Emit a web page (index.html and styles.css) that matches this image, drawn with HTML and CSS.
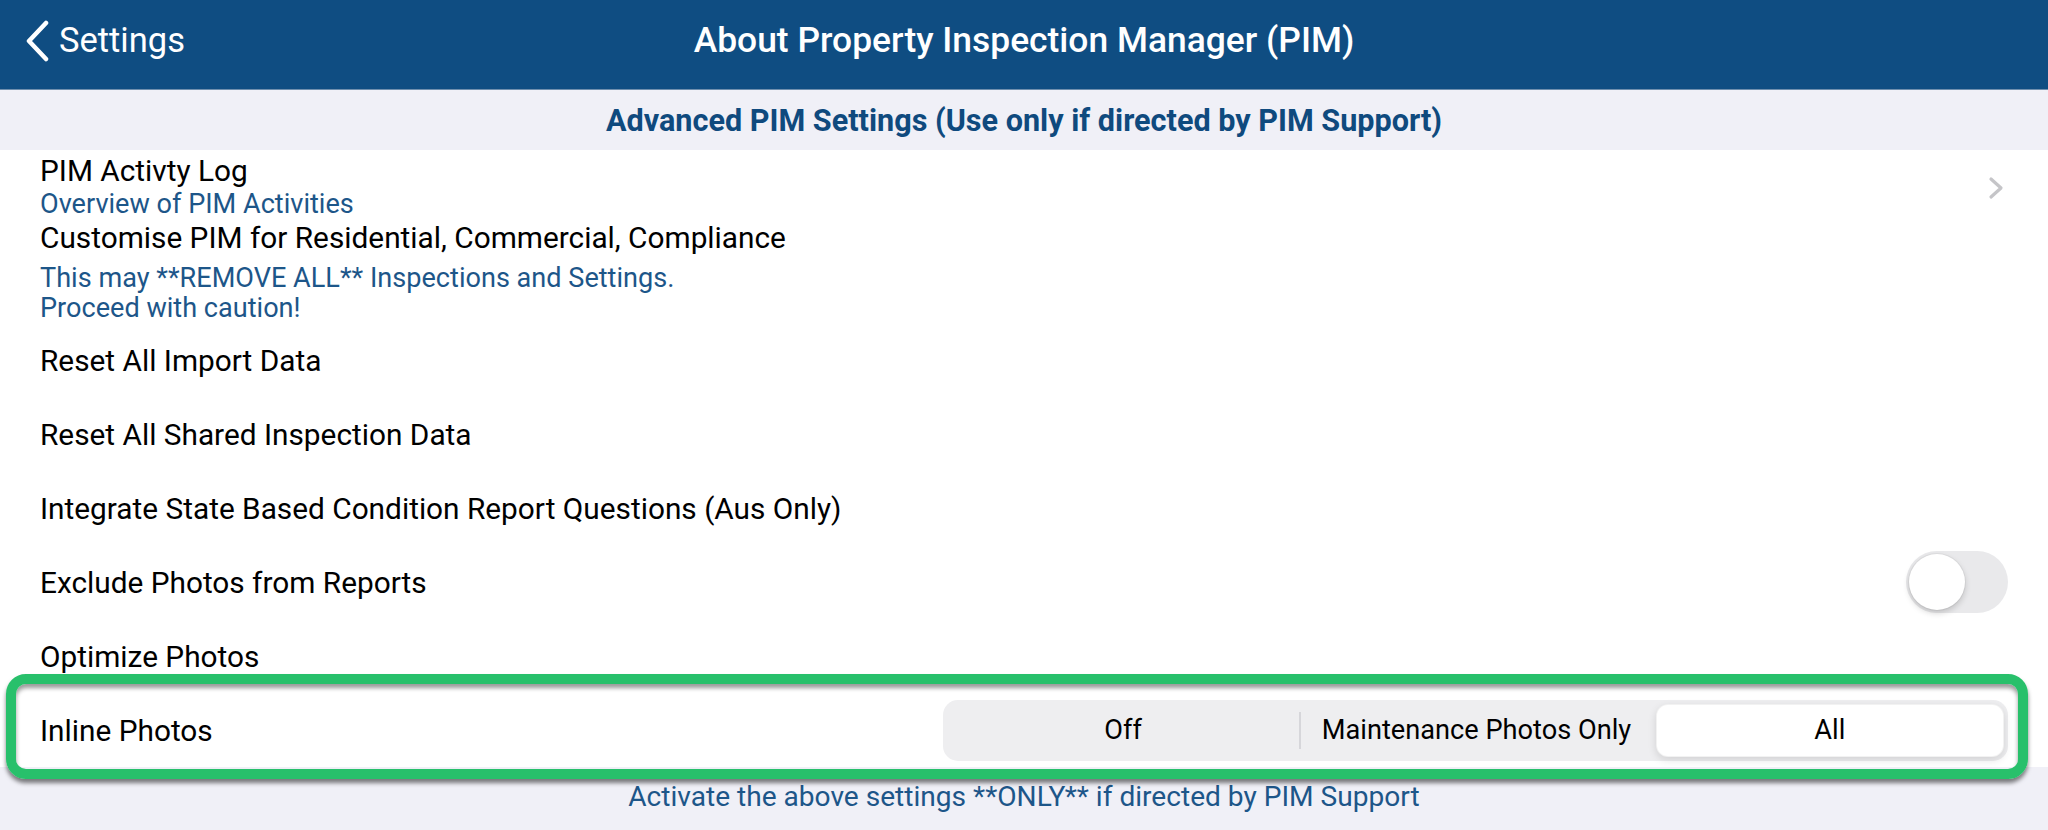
FILE: index.html
```html
<!DOCTYPE html>
<html lang="en">
<head>
<meta charset="utf-8">
<title>About Property Inspection Manager (PIM)</title>
<link rel="stylesheet" href="styles.css">
</head>
<body>
<div class="screen">
  <header class="nav">
    <div class="nav-back">
      <svg class="back-icon" width="26" height="42" viewBox="0 0 26 42"><polyline points="21,3 4,21 21,39" fill="none" stroke="#fff" stroke-width="4.5" stroke-linecap="round" stroke-linejoin="round"/></svg>
      <span>Settings</span>
    </div>
    <h1 class="nav-title">About Property Inspection Manager (PIM)</h1>
    <div class="nav-spacer"></div>
  </header>

  <div class="section-head">Advanced PIM Settings (Use only if directed by PIM Support)</div>

  <ul class="list">
    <li class="cell cell-nav">
      <div class="cell-text">
        <div class="title">PIM Activty Log</div>
        <div class="sub">Overview of PIM Activities</div>
      </div>
      <svg class="chevron" width="16" height="24" viewBox="0 0 16 24"><polyline points="3,3 13,12 3,21" fill="none" stroke="#c5c5c8" stroke-width="3.2" stroke-linecap="round" stroke-linejoin="round"/></svg>
    </li>
    <li class="cell cell-warn">
      <div class="title">Customise PIM for Residential, Commercial, Compliance</div>
      <div class="sub sub-warn">This may **REMOVE ALL** Inspections and Settings.<br>Proceed with caution!</div>
    </li>
    <li class="cell cell-plain">Reset All Import Data</li>
    <li class="cell cell-plain">Reset All Shared Inspection Data</li>
    <li class="cell cell-plain">Integrate State Based Condition Report Questions (Aus Only)</li>
    <li class="cell cell-plain">
      <span>Exclude Photos from Reports</span>
      <span class="switch"><span class="knob"></span></span>
    </li>
    <li class="cell cell-plain">Optimize Photos</li>
    <li class="cell cell-plain cell-highlight">
      <span>Inline Photos</span>
      <div class="segmented">
        <div class="seg">Off</div>
        <div class="seg seg-divided">Maintenance Photos Only</div>
        <div class="seg seg-selected">All</div>
      </div>
    </li>
  </ul>

  <div class="footer-note">Activate the above settings **ONLY** if directed by PIM Support</div>
</div>
</body>
</html>
```

FILE: styles.css
```css
* { box-sizing: border-box; }

html, body {
  margin: 0;
  padding: 0;
}

body {
  width: 2048px;
  height: 830px;
  overflow: hidden;
  background: #f0f0f7;
  font-family: Roboto, "Liberation Sans", Arial, sans-serif;
  color: #000;
}

.screen {
  display: flex;
  flex-direction: column;
  height: 830px;
}

/* ---------- navigation bar ---------- */
.nav {
  height: 90px;
  background: #0f4d82;
  border-bottom: 1px solid #6f8fae;
  display: grid;
  grid-template-columns: 1fr auto 1fr;
  align-items: center;
  color: #fff;
}

.nav-back {
  display: flex;
  align-items: center;
  gap: 8px;
  padding-left: 25px;
  font-size: 34.5px;
  font-weight: 400;
  padding-bottom: 9px;
}

.back-icon { display: block; margin-top: 2px; }

.nav-title {
  margin: 0;
  font-size: 35.4px;
  font-weight: 500;
  letter-spacing: 0;
  padding-bottom: 9px;
}

/* ---------- section header ---------- */
.section-head {
  height: 60px;
  display: flex;
  align-items: center;
  justify-content: center;
  color: #0f4a7e;
  font-size: 30.6px;
  font-weight: 700;
  padding-top: 0;
}

/* ---------- list ---------- */
.list {
  list-style: none;
  margin: 0;
  padding: 0;
  background: #fff;
}

.cell {
  padding: 0 40px;
  font-size: 29.8px;
}

.title {
  font-size: 29.8px;
  line-height: 34px;
}

.sub {
  font-size: 27.1px;
  line-height: 32px;
  color: #1d5689;
}

.cell-nav {
  height: 71px;
  display: flex;
  align-items: center;
  justify-content: space-between;
  padding-right: 44px;
}

.cell-nav .cell-text { padding-top: 3px; }

.chevron { display: block; margin-top: 4px; }

.cell-warn {
  height: 102px;
  padding-top: 0;
}

.sub-warn {
  margin-top: 8px;
  line-height: 30px;
}

.cell-plain {
  height: 74px;
  display: flex;
  align-items: center;
  justify-content: space-between;
}

/* ---------- switch ---------- */
.switch {
  width: 102px;
  height: 62px;
  border-radius: 31px;
  background: #e9e9eb;
  display: flex;
  align-items: center;
  padding-left: 3px;
}

.knob {
  width: 56px;
  height: 56px;
  border-radius: 50%;
  background: #fff;
  box-shadow: 0 3px 6px rgba(0, 0, 0, 0.18), 0 0 0 1px rgba(0, 0, 0, 0.04);
}

/* ---------- segmented control ---------- */
.segmented {
  width: 1065px;
  height: 61px;
  border-radius: 15px;
  background: #eeeef0;
  display: grid;
  grid-template-columns: 1fr 1fr 1fr;
  padding: 4px;
}

.seg {
  display: flex;
  align-items: center;
  justify-content: center;
  font-size: 27.2px;
  position: relative;
}

.seg-divided {
  border-left: 2px solid #d6d6da;
  margin: 8px 0;
}

.seg-selected {
  background: #fff;
  border-radius: 12px;
  border: 1px solid rgba(0, 0, 0, 0.05);
  box-shadow: 0 3px 8px rgba(0, 0, 0, 0.12);
  margin-left: 4px;
}

/* ---------- highlight annotation ---------- */
.cell-highlight {
  position: relative;
}

.cell-highlight::after {
  content: "";
  position: absolute;
  left: 6px;
  right: 20px;
  top: -19px;
  bottom: -12px;
  border: 10px solid #28c06b;
  border-radius: 20px;
  box-shadow: 0 4px 4px rgba(0, 0, 0, 0.5), inset 0 4px 4px rgba(0, 0, 0, 0.4);
  pointer-events: none;
}

/* ---------- footer ---------- */
.footer-note {
  text-align: center;
  padding-top: 12px;
  font-size: 28.1px;
  line-height: 36px;
  color: #1d5689;
}
```
